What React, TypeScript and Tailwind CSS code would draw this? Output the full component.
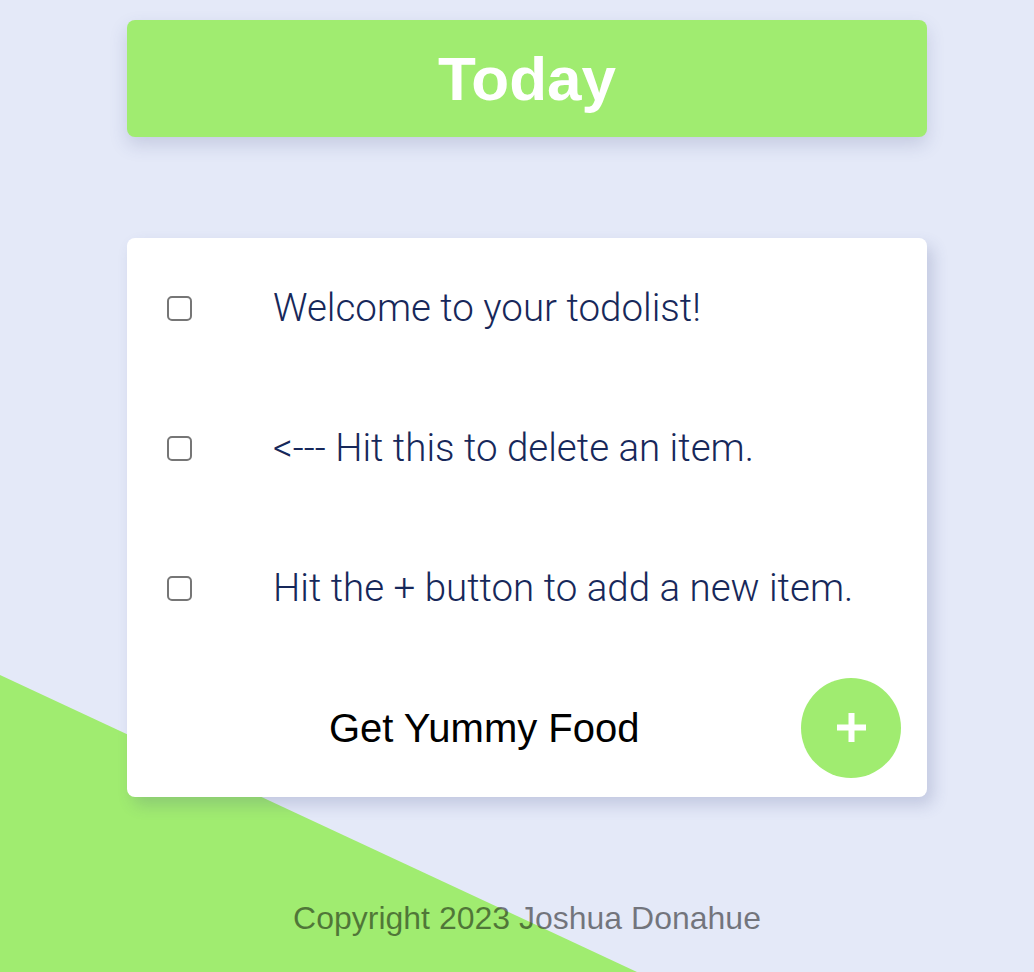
const items = [
  "Welcome to your todolist!",
  "<--- Hit this to delete an item.",
  "Hit the + button to add a new item.",
];

function Checkbox() {
  return <span className="block w-[25px] h-[25px] rounded-[5px] border-2 border-[#767676] bg-white shrink-0" />;
}

export default function App() {
  return (
    <div className="relative min-h-[972px] bg-[#e4e9f8] overflow-hidden font-['Liberation_Sans',Arial,sans-serif]">
      {/* green slope in the corner */}
      <div className="absolute inset-0 bg-[#a0ec70] [clip-path:polygon(0_675px,637px_972px,0_972px)]" />

      <div className="relative flex flex-col items-center pl-5 pt-5">
        {/* Heading */}
        <div className="w-[800px] h-[117px] rounded-lg bg-[#a0ec70] flex items-center justify-center shadow-[0_8px_18px_rgba(60,70,130,0.18)]">
          <h1 className="text-[62px] font-bold text-white leading-none">Today</h1>
        </div>

        {/* List card */}
        <div className="mt-[101px] w-[800px] rounded-lg bg-white shadow-[6px_8px_16px_rgba(60,70,130,0.2)]">
          {items.map((text) => (
            <div key={text} className="h-[140px] flex items-center">
              <div className="ml-10">
                <Checkbox />
              </div>
              <p className="ml-[81px] text-[38.5px] font-light text-[#17285a] font-['Roboto',sans-serif]">
                {text}
              </p>
            </div>
          ))}

          <form className="h-[139px] flex items-center" onSubmit={(e) => e.preventDefault()}>
            <input
              className="flex-1 min-w-0 pl-[202px] text-[40px] text-black bg-transparent outline-none"
              defaultValue="Get Yummy Food"
            />
            <button
              type="submit"
              className="shrink-0 mr-[26px] w-[100px] h-[100px] rounded-full bg-[#a0ec70] flex items-center justify-center"
            >
              <svg width="29" height="29" viewBox="0 0 29 29" fill="white">
                <rect x="11.5" y="0" width="6" height="29" />
                <rect x="0" y="11.5" width="29" height="6" />
              </svg>
            </button>
          </form>
        </div>

        <footer className="mt-[97px] text-[32px] text-black/50">Copyright 2023 Joshua Donahue</footer>
      </div>
    </div>
  );
}
